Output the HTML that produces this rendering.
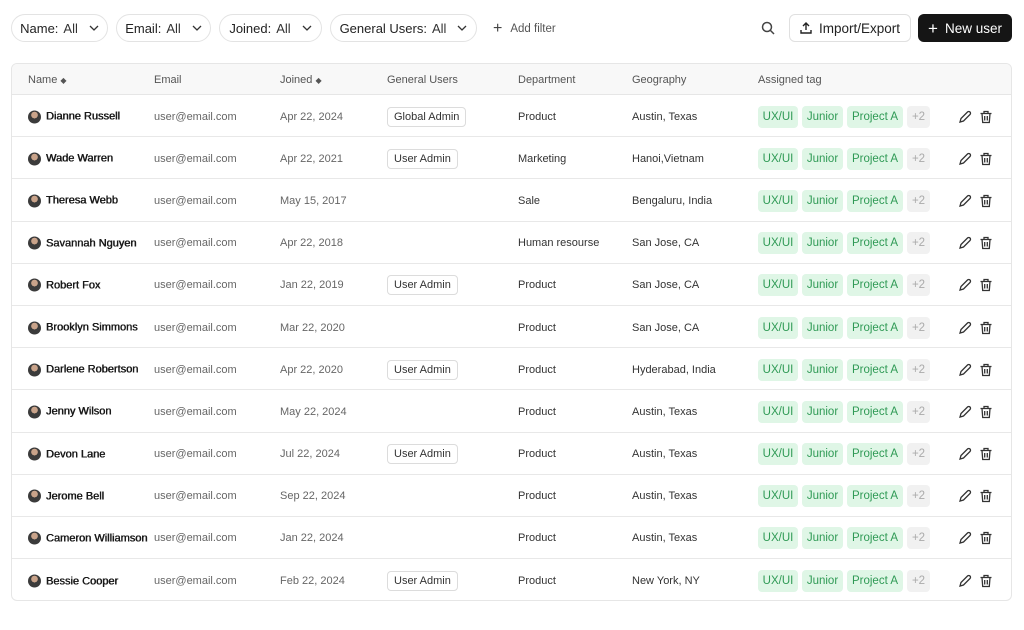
<!DOCTYPE html>
<html><head><meta charset="utf-8"><style>
*{box-sizing:border-box;margin:0;padding:0}
body{width:1024px;height:630px;background:#fff;font-family:"Liberation Sans",Arial,sans-serif;color:#1f1f1f;position:relative;overflow:hidden}
.pill{position:absolute;top:14px;height:28px;border:1px solid #e3e3e3;border-radius:14px;font-size:13px;display:flex;align-items:center;justify-content:center;gap:5px;color:#222}
.pill .all{color:#333}
.pill svg{margin-left:6px}
.btn{position:absolute;top:14px;height:28px;border-radius:6px;font-size:13.5px;display:flex;align-items:center;justify-content:center;gap:7px}
.tbl{position:absolute;left:11px;top:63px;width:1001px;height:538px;border:1px solid #e6e6e6;border-radius:6px;overflow:hidden}
.hd{height:31px;background:#f8f8f8;border-bottom:1px solid #e6e6e6;position:relative;font-size:11px;color:#555}
.row{height:42.2px;border-bottom:1px solid #e8e8e8;position:relative;font-size:11px;color:#666}
.row:last-child{border-bottom:none}
.c{position:absolute;top:calc(50% + 1px);transform:translateY(-50%);white-space:nowrap}
.nm{color:#1a1a1a;font-size:11px;display:flex;align-items:center;gap:5px;text-shadow:0.35px 0 0 #1a1a1a,-0.1px 0 0 #1a1a1a}
.av{width:13px;height:13px;border-radius:50%;background:radial-gradient(circle at 50% 35%,#c9a38a 30%,#3b3b3b 32%);display:inline-block}
.badge{border:1px solid #dcdcdc;border-radius:4px;padding:3px 6px;color:#333}
.dk{color:#333}
.tag{position:absolute;top:calc(50% + 1px);transform:translateY(-50%);height:22px;border-radius:4px;background:#dff6e6;color:#2f9a55;font-size:11.5px;display:flex;align-items:center;justify-content:center}
.more{background:#f1f1f1;color:#aaa}
</style></head><body>
<div class="pill" style="left:11px;width:97px">Name: <span class="all">All</span><svg width="10" height="6" viewBox="0 0 10 6"><path d="M1 1l4 4 4-4" fill="none" stroke="#333" stroke-width="1.3"/></svg></div>
<div class="pill" style="left:116px;width:95px">Email: <span class="all">All</span><svg width="10" height="6" viewBox="0 0 10 6"><path d="M1 1l4 4 4-4" fill="none" stroke="#333" stroke-width="1.3"/></svg></div>
<div class="pill" style="left:219px;width:103px">Joined: <span class="all">All</span><svg width="10" height="6" viewBox="0 0 10 6"><path d="M1 1l4 4 4-4" fill="none" stroke="#333" stroke-width="1.3"/></svg></div>
<div class="pill" style="left:330px;width:147px">General Users: <span class="all">All</span><svg width="10" height="6" viewBox="0 0 10 6"><path d="M1 1l4 4 4-4" fill="none" stroke="#333" stroke-width="1.3"/></svg></div>
<div style="position:absolute;left:493px;top:20px;font-size:11.5px;color:#555;display:flex;align-items:center;gap:8px"><span style="font-size:16px;color:#444">+</span>Add filter</div>
<svg style="position:absolute;left:761px;top:21px" width="14" height="14" viewBox="0 0 14 14"><circle cx="6" cy="6" r="4.5" fill="none" stroke="#444" stroke-width="1.5"/><path d="M9.5 9.5l3.5 3.5" stroke="#444" stroke-width="1.5"/></svg>
<div class="btn" style="left:789px;width:122px;border:1px solid #e0e0e0;color:#222"><svg width="12" height="12" viewBox="0 0 12 12"><path d="M6 8V1M3 4l3-3 3 3M1 8v3h10V8" fill="none" stroke="#222" stroke-width="1.4"/></svg>Import/Export</div>
<div class="btn" style="left:918px;width:94px;background:#151515;color:#fff"><span style="font-size:17px;line-height:1">+</span>New user</div>
<div class="tbl">
<div class="hd">
<span class="c" style="left:16px">Name <span style="font-size:8px;color:#555">◆</span></span>
<span class="c" style="left:142px">Email</span>
<span class="c" style="left:268px">Joined <span style="font-size:8px;color:#555">◆</span></span>
<span class="c" style="left:375px">General Users</span>
<span class="c" style="left:506px">Department</span>
<span class="c" style="left:620px">Geography</span>
<span class="c" style="left:746px">Assigned tag</span>
</div>
<div id="rows"></div>
</div>
<script>
var d=[["Dianne Russell","Apr 22, 2024","Global Admin","Product","Austin, Texas"],
["Wade Warren","Apr 22, 2021","User Admin","Marketing","Hanoi,Vietnam"],
["Theresa Webb","May 15, 2017","","Sale","Bengaluru, India"],
["Savannah Nguyen","Apr 22, 2018","","Human resourse","San Jose, CA"],
["Robert Fox","Jan 22, 2019","User Admin","Product","San Jose, CA"],
["Brooklyn Simmons","Mar 22, 2020","","Product","San Jose, CA"],
["Darlene Robertson","Apr 22, 2020","User Admin","Product","Hyderabad, India"],
["Jenny Wilson","May 22, 2024","","Product","Austin, Texas"],
["Devon Lane","Jul 22, 2024","User Admin","Product","Austin, Texas"],
["Jerome Bell","Sep 22, 2024","","Product","Austin, Texas"],
["Cameron Williamson","Jan 22, 2024","","Product","Austin, Texas"],
["Bessie Cooper","Feb 22, 2024","User Admin","Product","New York, NY"]];
var h="";
d.forEach(function(r){
h+='<div class="row"><span class="c nm" style="left:16px"><i class="av"></i>'+r[0]+'</span>'+
'<span class="c" style="left:142px">user@email.com</span>'+
'<span class="c" style="left:268px">'+r[1]+'</span>'+
(r[2]?'<span class="c badge" style="left:375px">'+r[2]+'</span>':'')+
'<span class="c dk" style="left:506px">'+r[3]+'</span>'+
'<span class="c dk" style="left:620px">'+r[4]+'</span>'+
'<span class="tag" style="left:746px;width:40px">UX/UI</span>'+
'<span class="tag" style="left:790px;width:41px">Junior</span>'+
'<span class="tag" style="left:835px;width:56px">Project A</span>'+
'<span class="tag more" style="left:895px;width:23px">+2</span>'+
'<svg class="c" style="left:946px" width="14" height="14" viewBox="0 0 14 14"><path d="M2 12l1-3.5 6.5-6.5a1.4 1.4 0 0 1 2.5 2.5L5.5 11z" fill="none" stroke="#333" stroke-width="1.3"/></svg>'+
'<svg class="c" style="left:967px" width="14" height="14" viewBox="0 0 14 14"><path d="M1.5 3.5h11M5 3.5V1.5h4v2M3 3.5l.7 9h6.6l.7-9M5.7 6v4.5M8.3 6v4.5" fill="none" stroke="#333" stroke-width="1.3"/></svg></div>';
});
document.getElementById("rows").innerHTML=h;
</script>
</body></html>
